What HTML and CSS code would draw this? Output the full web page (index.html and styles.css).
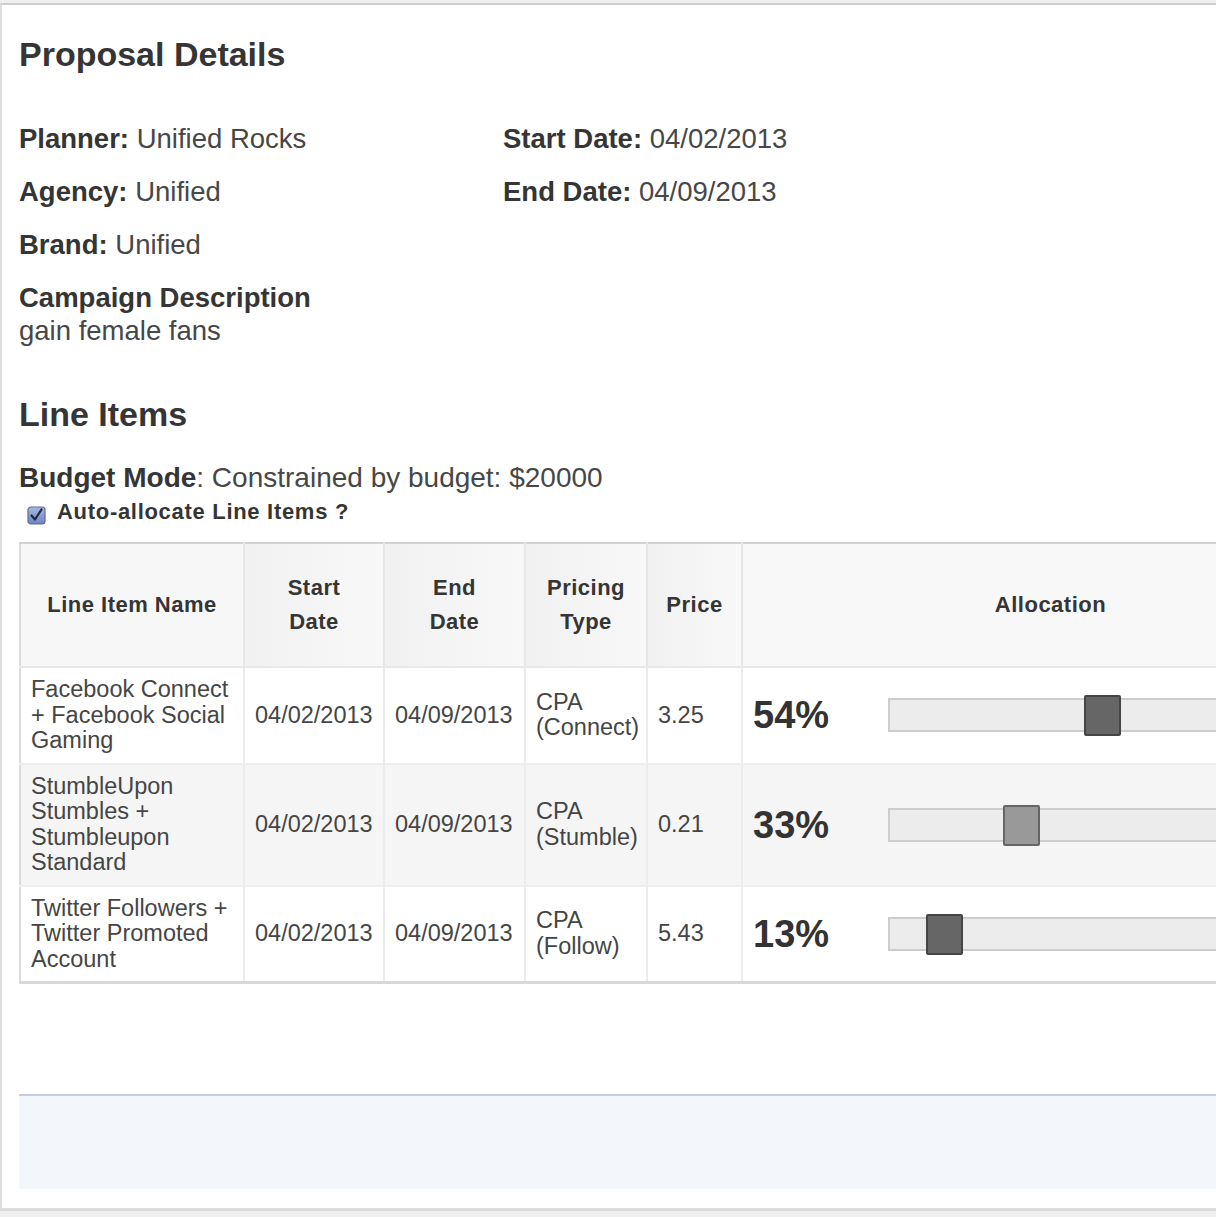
FILE: index.html
```html
<!DOCTYPE html>
<html lang="en">
<head>
<meta charset="utf-8">
<title>Proposal Details</title>
<link rel="stylesheet" href="styles.css">
</head>
<body>
<div class="panel">
  <h1 class="title">Proposal Details</h1>

  <div class="details">
    <div class="field"><b>Planner:</b> Unified Rocks</div>
    <div class="field"><b>Start Date:</b> 04/02/2013</div>
    <div class="field"><b>Agency:</b> Unified</div>
    <div class="field"><b>End Date:</b> 04/09/2013</div>
    <div class="field"><b>Brand:</b> Unified</div>
    <div class="field"></div>
    <div class="field desc"><b>Campaign Description</b><br>gain female fans</div>
  </div>

  <h2 class="title sub">Line Items</h2>

  <div class="budget"><b>Budget Mode</b>: Constrained by budget: $20000</div>
  <label class="auto">
    <svg class="check" width="19" height="19" viewBox="0 0 19 19">
      <defs>
        <linearGradient id="cb" x1="0" y1="0" x2="0" y2="1">
          <stop offset="0" stop-color="#a9b8e0"/>
          <stop offset="1" stop-color="#6d84c2"/>
        </linearGradient>
      </defs>
      <rect x="1" y="1" width="17" height="17" rx="3" fill="url(#cb)" stroke="#5b6c9c" stroke-width="1.2"/>
      <path d="M4.5 9.5 L8 13.5 L14.5 3.5" fill="none" stroke="#1d2747" stroke-width="2.2" stroke-linecap="round" stroke-linejoin="round"/>
    </svg>
    <span>Auto-allocate Line Items ?</span>
  </label>

  <table class="items">
    <colgroup>
      <col class="c-name">
      <col class="c-date1">
      <col class="c-date2">
      <col class="c-type">
      <col class="c-price">
      <col class="c-alloc">
    </colgroup>
    <thead>
      <tr>
        <th>Line Item Name</th>
        <th>Start<br>Date</th>
        <th>End<br>Date</th>
        <th>Pricing<br>Type</th>
        <th>Price</th>
        <th class="h-alloc">Allocation</th>
      </tr>
    </thead>
    <tbody>
      <tr>
        <td>Facebook Connect + Facebook Social Gaming</td>
        <td class="nowrap">04/02/2013</td>
        <td class="nowrap">04/09/2013</td>
        <td>CPA (Connect)</td>
        <td>3.25</td>
        <td>
          <div class="alloc">
            <span class="pct">54%</span>
            <div class="track"><span class="handle" style="left:194px"></span></div>
          </div>
        </td>
      </tr>
      <tr class="alt">
        <td>StumbleUpon Stumbles + Stumbleupon Standard</td>
        <td class="nowrap">04/02/2013</td>
        <td class="nowrap">04/09/2013</td>
        <td>CPA (Stumble)</td>
        <td>0.21</td>
        <td>
          <div class="alloc">
            <span class="pct">33%</span>
            <div class="track"><span class="handle light" style="left:113px"></span></div>
          </div>
        </td>
      </tr>
      <tr>
        <td>Twitter Followers + Twitter Promoted Account</td>
        <td class="nowrap">04/02/2013</td>
        <td class="nowrap">04/09/2013</td>
        <td>CPA (Follow)</td>
        <td>5.43</td>
        <td>
          <div class="alloc">
            <span class="pct">13%</span>
            <div class="track"><span class="handle" style="left:36px"></span></div>
          </div>
        </td>
      </tr>
    </tbody>
  </table>

  <div class="summary"></div>
</div>
</body>
</html>
```

FILE: styles.css
```css
html, body {
  overflow: hidden;
}

body {
  margin: 0;
  background: #efefef;
  font-family: "Liberation Sans", Arial, Helvetica, sans-serif;
  color: #474747;
}

.panel {
  margin-top: 3px;
  overflow: hidden;
  background: #fff;
  border-top: 2px solid #cecece;
  border-left: 2px solid #dcdcdc;
  border-bottom: 3px solid #dcdcdc;
  padding: 29px 0 19px 17px;
}

.title {
  margin: 0;
  font-size: 34px;
  line-height: 40px;
  font-weight: bold;
  color: #353535;
}

.details {
  margin-top: 48px;
  display: grid;
  grid-template-columns: 484px auto;
  row-gap: 20px;
  font-size: 27.5px;
  line-height: 33px;
}

.field b {
  color: #353535;
}

.desc {
  grid-column: 1 / 3;
}

.sub {
  margin-top: 47px;
}

.budget {
  margin-top: 27px;
  font-size: 28px;
  line-height: 34px;
}

.budget b {
  color: #353535;
}

.auto {
  display: flex;
  align-items: center;
  height: 34px;
  font-size: 22px;
  font-weight: bold;
  letter-spacing: 0.7px;
  color: #353535;
}

.check {
  margin: 7px 11px 0 8px;
  flex: none;
}

.items {
  margin-top: 13px;
  border-collapse: collapse;
  table-layout: fixed;
  width: 1339px;
  border-top: 2px solid #d3d3d3;
  border-left: 2px solid #dcdcdc;
  border-bottom: 3px solid #d8d8d8;
}

.c-name { width: 224px; }
.c-date1 { width: 140px; }
.c-date2 { width: 141px; }
.c-type { width: 122px; }
.c-price { width: 95px; }
.c-alloc { width: 617px; }

.items th {
  padding: 27px 10px;
  font-size: 22px;
  line-height: 34px;
  font-weight: bold;
  letter-spacing: 0.5px;
  color: #353535;
  text-align: center;
  vertical-align: middle;
  background: linear-gradient(to right, #f1f1f1, #f8f8f8);
  border-right: 2px solid #e6e6e6;
  border-bottom: 2px solid #e8e8e8;
}

.items th:first-child {
  background: #f7f7f7;
}

.items th.h-alloc {
  background: #f8f8f8;
}

.items td {
  padding: 9px 10px;
  font-size: 23.5px;
  line-height: 25.5px;
  color: #454545;
  vertical-align: middle;
  border-right: 2px solid #ececec;
  border-top: 2px solid #eeeeee;
}

.items tr.alt td {
  background: #f5f5f5;
}

.nowrap {
  white-space: nowrap;
}

.alloc {
  display: flex;
  align-items: center;
}

.pct {
  width: 135px;
  flex: none;
  font-size: 38px;
  line-height: 44px;
  font-weight: bold;
  color: #333;
}

.track {
  position: relative;
  flex: 1;
  height: 34px;
  box-sizing: border-box;
  border: 2px solid #cdcdcd;
  background: #ececec;
  margin-right: 10px;
}

.handle {
  position: absolute;
  top: -5px;
  width: 37px;
  height: 41px;
  box-sizing: border-box;
  border: 2px solid #454545;
  background: #666;
  border-radius: 2px;
}

.handle.light {
  border-color: #666;
  background: #999;
}

.summary {
  margin-top: 110px;
  width: 1400px;
  height: 93px;
  border-top: 2px solid #c6cde2;
  background: #f3f6fb;
  border-radius: 0 0 3px 3px;
}
```
